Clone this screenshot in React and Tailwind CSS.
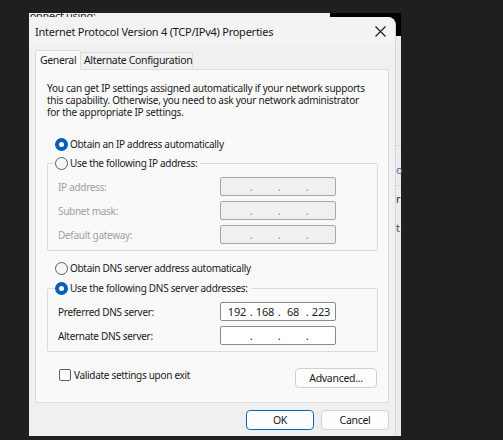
import React from "react";

function Radio({ checked }) {
  if (checked) {
    return (
      <span className="flex h-[13px] w-[13px] shrink-0 items-center justify-center rounded-full bg-[#005fb8]">
        <span className="h-[5px] w-[5px] rounded-full bg-white" />
      </span>
    );
  }
  return <span className="h-[13px] w-[13px] shrink-0 rounded-full border border-[#5d5d5d] bg-[#f7f7f7]" />;
}

function IpBox({ parts, disabled }) {
  return (
    <div
      className={
        "flex h-[19px] w-[116px] items-center rounded-[2px] border pl-[4px] text-[11px] tracking-[-0.2px] " +
        (disabled ? "border-[#a8a8a8] bg-[#f0f0f0] text-[#8a8a8a]" : "border-[#8a8a8a] bg-white text-[#1a1a1a]")
      }
    >
      {parts.map((p, i) => (
        <React.Fragment key={i}>
          {i > 0 && <span className="w-[4px] text-center leading-none">.</span>}
          <span className="w-[24px] text-center leading-none">{p}</span>
        </React.Fragment>
      ))}
    </div>
  );
}

function Field({ label, parts, disabled }) {
  return (
    <div className="flex items-center pl-[10px]">
      <span className={"w-[162px] " + (disabled ? "text-[#a0a0a0]" : "text-[#1a1a1a]")}>{label}</span>
      <IpBox parts={parts} disabled={disabled} />
    </div>
  );
}

function Button({ children, primary, className = "" }) {
  return (
    <div
      className={
        "flex h-[20px] items-center justify-center rounded-[4px] border bg-[#fdfdfd] text-[10.5px] tracking-[-0.3px] text-[#1a1a1a] " +
        (primary ? "border-[#0067c0] " : "border-[#d0d0d0] ") +
        className
      }
    >
      {children}
    </div>
  );
}

const empty = ["", "", "", ""];

export default function App() {
  return (
    <div className="relative h-[440px] w-[503px] overflow-hidden bg-[#1f1f1f] font-['Segoe_UI','Noto_Sans',sans-serif] text-[10px] leading-[16px] tracking-[-0.3px]">
      {/* window behind the dialog */}
      <div className="absolute left-[29px] top-[13px] flex h-[423px] w-[372px] flex-col bg-[#ececec]">
        <div className="flex h-[23px]">
          <div className="flex-1 overflow-hidden bg-[#f3f3f3]">
            <div className="-ml-[6px] -mt-[5px] whitespace-nowrap text-[11px] text-[#1a1a1a]">Connect using:</div>
          </div>
          <div className="w-[71px] bg-black" />
        </div>
        <div className="relative flex-1 border-l border-[#c8c8c8]">
          <div className="absolute right-0 top-[109px] h-px w-[6px] bg-[#d8d8d8]" />
          <div className="absolute right-0 top-[149px] h-px w-[6px] bg-[#d8d8d8]" />
          <span className="absolute left-[366px] top-[126px] text-[11px] text-[#3a6fb0]">o</span>
          <span className="absolute left-[366px] top-[155px] text-[11px] text-[#333]">r</span>
          <span className="absolute left-[366px] top-[184px] text-[11px] text-[#5a4a3a]">t</span>
        </div>
      </div>

      {/* dialog */}
      <div className="absolute left-[29px] top-[17px] flex h-[419px] w-[367px] flex-col rounded-tr-[8px] border-r border-[#d6d6d6] bg-[#f0f0f0] text-[#1a1a1a]">
        <div className="flex h-[29px] items-center justify-between rounded-tr-[8px] bg-[#f3f3f3] pl-[6px] pr-[9px]">
          <span className="text-[11px] tracking-[-0.25px]">Internet Protocol Version 4 (TCP/IPv4) Properties</span>
          <svg width="11" height="11" viewBox="0 0 11 11">
            <path d="M0.5 0.5 L10.5 10.5 M10.5 0.5 L0.5 10.5" stroke="#1a1a1a" strokeWidth="1.1" />
          </svg>
        </div>

        <div className="flex flex-col px-[6px] pt-[4px]">
          {/* tabs */}
          <div className="relative z-10 flex items-end whitespace-nowrap text-[10.5px] tracking-[-0.35px]">
            <div className="-mb-px h-[20px] w-[46px] border border-b-0 border-[#dcdcdc] bg-[#f9f9f9] pl-[4px] pt-[1px]">General</div>
            <div className="h-[17px] w-[112px] border border-b-0 border-l-0 border-[#dcdcdc] pl-[3px] leading-[15px]">Alternate Configuration</div>
          </div>

          {/* panel */}
          <div className="h-[334px] border border-[#dcdcdc] bg-[#f9f9f9] pl-[11px] pr-[10px]">
            <p className="whitespace-nowrap pt-[12px] leading-[12px] tracking-[-0.25px]">
              You can get IP settings assigned automatically if your network supports
              <br />
              this capability. Otherwise, you need to ask your network administrator
              <br />
              for the appropriate IP settings.
            </p>

            <div className="mt-[18px] flex h-[16px] items-center gap-[2px] pl-[8px]">
              <Radio checked />
              <span>Obtain an IP address automatically</span>
            </div>

            <div className="mt-[11px] rounded-[2px] border border-[#dcdcdc] pb-[6px]">
              <div className="-mt-[9px] ml-[7px] flex h-[16px] w-fit items-center gap-[2px] bg-[#f9f9f9] pr-[3px]">
                <Radio />
                <span>Use the following IP address:</span>
              </div>
              <div className="mt-[6px] flex flex-col gap-[5px]">
                <Field label="IP address:" parts={empty} disabled />
                <Field label="Subnet mask:" parts={empty} disabled />
                <Field label="Default gateway:" parts={empty} disabled />
              </div>
            </div>

            <div className="mt-[9px] flex h-[16px] items-center gap-[2px] pl-[8px]">
              <Radio />
              <span>Obtain DNS server address automatically</span>
            </div>

            <div className="mt-[12px] rounded-[2px] border border-[#dcdcdc] pb-[6px]">
              <div className="-mt-[9px] ml-[7px] flex h-[16px] w-fit items-center gap-[2px] bg-[#f9f9f9] pr-[3px]">
                <Radio checked />
                <span>Use the following DNS server addresses:</span>
              </div>
              <div className="mt-[6px] flex flex-col gap-[5px]">
                <Field label="Preferred DNS server:" parts={["192", "168", "68", "223"]} />
                <Field label="Alternate DNS server:" parts={empty} />
              </div>
            </div>

            <div className="mt-[16px] flex items-start justify-between pr-[1px]">
              <div className="ml-[12px] flex h-[13px] items-center gap-[3px]">
                <span className="h-[12px] w-[12px] rounded-[2px] border border-[#5d5d5d] bg-white" />
                <span>Validate settings upon exit</span>
              </div>
              <Button className="w-[82px]">Advanced...</Button>
            </div>
          </div>

          {/* dialog buttons */}
          <div className="mt-[7px] flex justify-end gap-[7px]">
            <Button primary className="w-[68px]">OK</Button>
            <Button className="w-[68px]">Cancel</Button>
          </div>
        </div>
      </div>
    </div>
  );
}
